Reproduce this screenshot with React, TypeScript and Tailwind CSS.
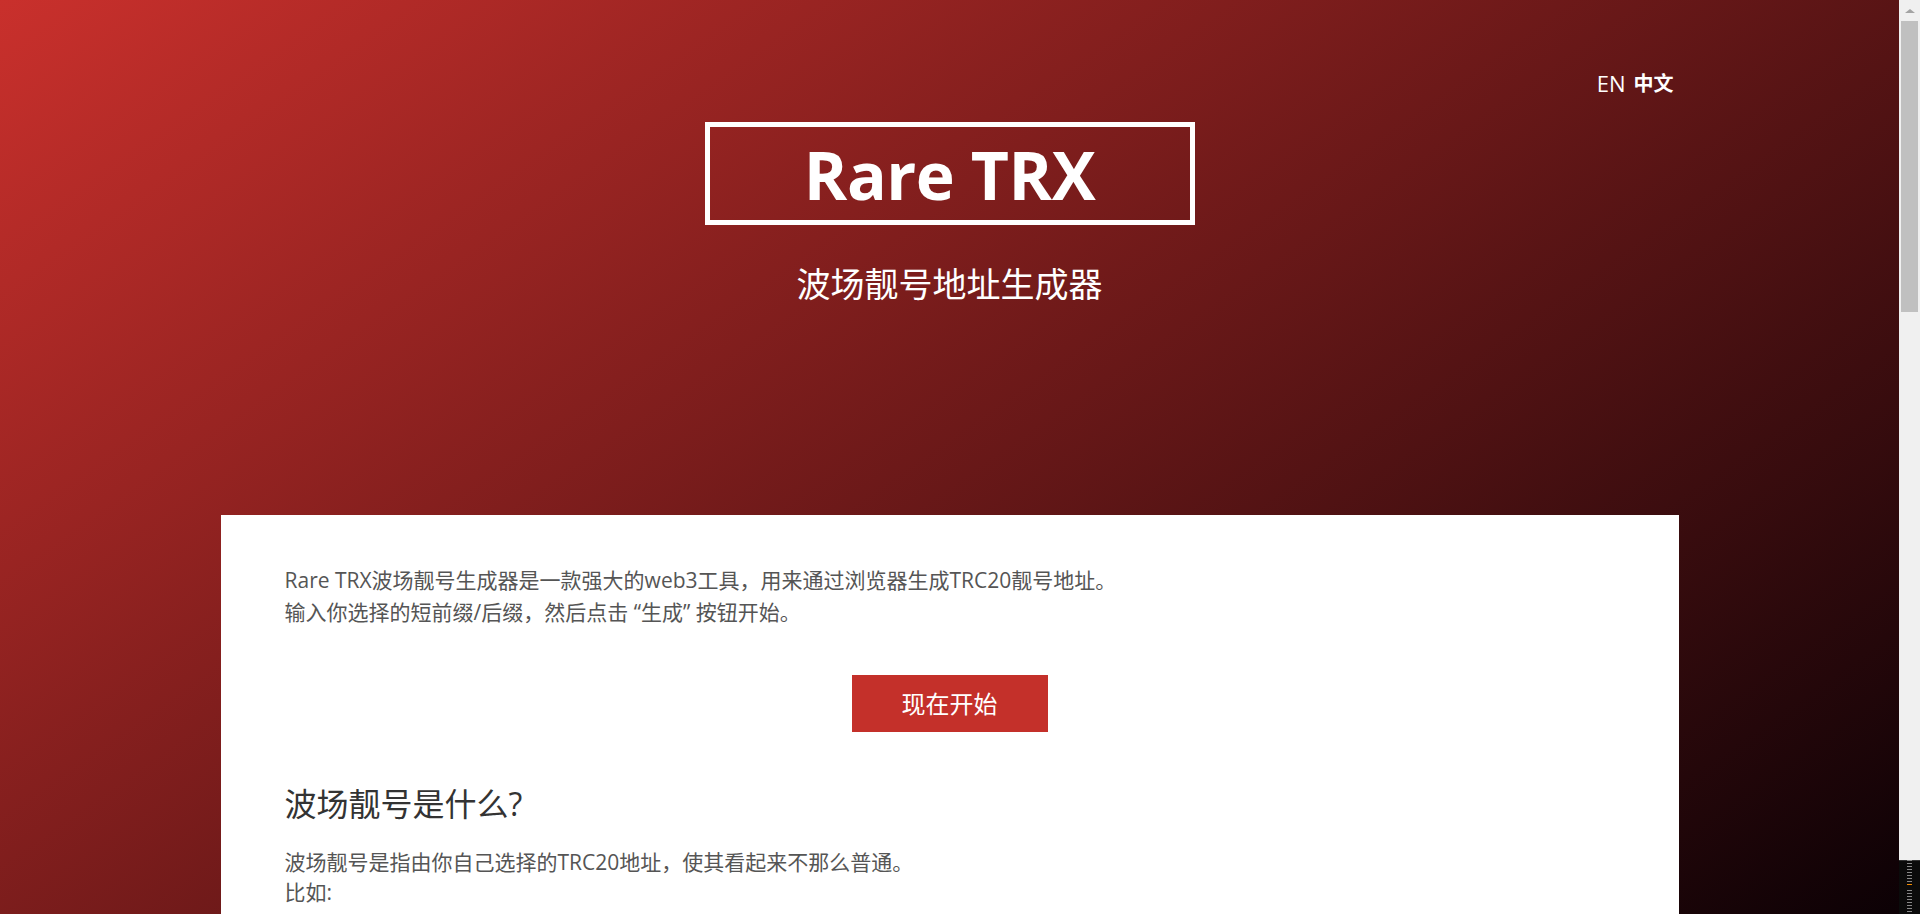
import React from 'react';

const ticks = Array.from({ length: 9 });

const App = () => {
  return (
    <div className="flex h-screen overflow-hidden font-['Open_Sans','Noto_Sans_CJK_SC',sans-serif]">
      {/* Page */}
      <div className="flex-1 overflow-hidden bg-[linear-gradient(145deg,#c9302c,#0c0105)]">
        {/* Hero */}
        <header className="w-[1458px] mx-auto">
          <div className="flex justify-end items-center gap-[8px] pt-[70px] pr-[5px] leading-[27px] text-white">
            <span className="text-[22px] cursor-pointer">EN</span>
            <span className="text-[20px] font-bold cursor-pointer">中文</span>
          </div>
          <div className="mx-auto mt-[25px] w-[490px] h-[103px] border-[5px] border-white flex items-center justify-center">
            <h1 className="text-[66px] leading-none font-bold text-white tracking-[-0.5px]">Rare TRX</h1>
          </div>
          <p className="mt-[39px] text-center text-[34px] leading-[40px] text-white">波场靓号地址生成器</p>
        </header>

        {/* Content card */}
        <main className="w-[1458px] mx-auto mt-[211px] bg-white px-[64px] pt-[49px] pb-[200px]">
          <p className="text-[21px] leading-[32px] text-[#555]">
            Rare TRX波场靓号生成器是一款强大的web3工具，用来通过浏览器生成TRC20靓号地址。
            <br />
            输入你选择的短前缀/后缀，然后点击 “生成” 按钮开始。
          </p>

          <button className="block mx-auto mt-[47px] w-[196px] h-[57px] bg-[#c4302a] text-white text-[24px] leading-none">
            现在开始
          </button>

          <h2 className="mt-[53px] text-[32px] leading-[38px] text-[#333]">波场靓号是什么?</h2>
          <p className="mt-[24px] text-[21px] leading-[30px] text-[#555]">
            波场靓号是指由你自己选择的TRC20地址，使其看起来不那么普通。
            <br />
            比如:
          </p>
        </main>
      </div>

      {/* Scrollbar */}
      <div className="w-[21px] shrink-0 bg-[#f0f0f0] flex flex-col items-center">
        <div className="h-[21px] flex items-center justify-center">
          <div className="w-0 h-0 border-l-[5px] border-r-[5px] border-b-[4px] border-l-transparent border-r-transparent border-b-[#a3a3a3]" />
        </div>
        <div className="w-[17px] h-[291px] bg-[#c0c0c0]" />
        <div className="mt-auto w-full h-[54px] bg-[#0b0b0b] border-t border-[#333] flex flex-col items-center justify-center gap-[5px]">
          <div className="flex flex-col gap-[2px]">
            {ticks.map((_, i) => (
              <div key={i} className={i === 8 ? 'w-[5px] h-px bg-[#f08a00]' : 'w-[5px] h-px bg-[#888]'} />
            ))}
          </div>
          <div className="flex flex-col gap-[2px]">
            {ticks.map((_, i) => (
              <div key={i} className="w-[5px] h-px bg-[#888]" />
            ))}
          </div>
        </div>
      </div>
    </div>
  );
};

export default App;
